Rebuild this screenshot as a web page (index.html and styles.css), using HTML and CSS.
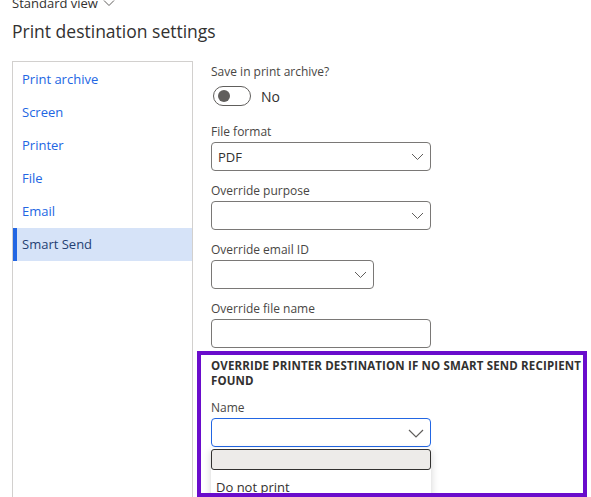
FILE: index.html
```html
<!DOCTYPE html>
<html>
<head>
<meta charset="utf-8">
<link rel="stylesheet" href="styles.css">
</head>
<body>
<div class="page">
  <div class="viewbar">Standard view
    <svg class="viewchev" width="12" height="8" viewBox="0 0 12 8"><path d="M1 1.5 L6 6.5 L11 1.5" fill="none" stroke="#605e5c" stroke-width="1"/></svg>
  </div>
  <h1 class="title">Print destination settings</h1>
  <div class="main">
    <nav class="nav">
      <a class="nav-item">Print archive</a>
      <a class="nav-item">Screen</a>
      <a class="nav-item">Printer</a>
      <a class="nav-item">File</a>
      <a class="nav-item">Email</a>
      <a class="nav-item selected">Smart Send</a>
    </nav>
    <div class="form">
      <div class="label">Save in print archive?</div>
      <div class="toggle-row">
        <span class="toggle"><span class="knob"></span></span>
        <span class="toggle-text">No</span>
      </div>
      <div class="field">
        <div class="label">File format</div>
        <div class="select wide"><span class="value">PDF</span>
          <svg class="chev" width="13" height="8" viewBox="0 0 13 8"><path d="M1 1 L6.5 6.5 L12 1" fill="none" stroke="#605e5c" stroke-width="1"/></svg>
        </div>
      </div>
      <div class="field">
        <div class="label">Override purpose</div>
        <div class="select wide"><span class="value"></span>
          <svg class="chev" width="13" height="8" viewBox="0 0 13 8"><path d="M1 1 L6.5 6.5 L12 1" fill="none" stroke="#605e5c" stroke-width="1"/></svg>
        </div>
      </div>
      <div class="field">
        <div class="label">Override email ID</div>
        <div class="select narrow"><span class="value"></span>
          <svg class="chev" width="13" height="8" viewBox="0 0 13 8"><path d="M1 1 L6.5 6.5 L12 1" fill="none" stroke="#605e5c" stroke-width="1"/></svg>
        </div>
      </div>
      <div class="field last">
        <div class="label">Override file name</div>
        <div class="select wide"><span class="value"></span></div>
      </div>
      <section class="override">
        <div class="override-head">OVERRIDE PRINTER DESTINATION IF NO SMART SEND RECIPIENT FOUND</div>
        <div class="label">Name</div>
        <div class="combo">
          <div class="select wide focused"><span class="value"></span>
            <svg class="chev big" width="16" height="9" viewBox="0 0 16 9"><path d="M1 1 L8 8 L15 1" fill="none" stroke="#605e5c" stroke-width="1.2"/></svg>
          </div>
          <div class="dropdown">
            <div class="option blank"></div>
            <div class="option">Do not print</div>
          </div>
        </div>
      </section>
    </div>
  </div>
</div>
</body>
</html>
```

FILE: styles.css
```css
html, body {
  margin: 0;
  padding: 0;
  background: #ffffff;
  overflow: hidden;
}

.page {
  font-family: "Open Sans", "Noto Sans", sans-serif;
  color: #323130;
  height: 497px;
  overflow: hidden;
}

.viewbar {
  margin: -6px 0 0 12px;
  font-size: 13px;
  line-height: 18px;
  color: #323130;
  display: flex;
  align-items: center;
  gap: 5px;
}

.title {
  margin: 7px 0 0 12px;
  font-size: 17.5px;
  line-height: 24px;
  font-weight: 500;
  color: #323130;
}

.main {
  display: flex;
  margin-top: 18px;
  padding-left: 12px;
  gap: 18px;
}

.nav {
  flex: 0 0 auto;
  width: 179px;
  height: 460px;
  border: 1px solid #d2d0ce;
  border-bottom: none;
  display: flex;
  flex-direction: column;
  padding-top: 1px;
}

.nav-item {
  display: block;
  height: 33px;
  line-height: 33px;
  padding-left: 5px;
  font-size: 13px;
  color: #2266e3;
  border-left: 4px solid transparent;
}

.nav-item.selected {
  background: #d6e3f8;
  border-left-color: #2266e3;
  color: #243f73;
}

.form {
  flex: 0 0 auto;
  display: flex;
  flex-direction: column;
  padding-top: 1px;
  width: 390px;
}

.label {
  font-size: 12px;
  line-height: 20px;
  color: #484644;
}

.toggle-row {
  display: flex;
  align-items: center;
  margin-top: 4px;
  margin-bottom: 16px;
  height: 20px;
}

.toggle {
  box-sizing: border-box;
  width: 38px;
  height: 20px;
  margin-left: 2px;
  border: 1px solid #605e5c;
  border-radius: 10px;
  display: flex;
  align-items: center;
  padding-left: 4px;
}

.knob {
  width: 12px;
  height: 12px;
  border-radius: 50%;
  background: #605e5c;
}

.toggle-text {
  margin-left: 10px;
  font-size: 14px;
  color: #323130;
}

.field {
  margin-bottom: 10px;
}

.field.last {
  margin-bottom: 3px;
}

.select {
  box-sizing: border-box;
  height: 29px;
  border: 1px solid #7a7876;
  border-radius: 4px;
  display: flex;
  align-items: center;
  justify-content: space-between;
  padding: 0 6px 0 6px;
  background: #fff;
}

.select.wide { width: 220px; }
.select.narrow { width: 163px; }

.select.focused {
  border-color: #2266e3;
}

.value {
  font-size: 13px;
  color: #323130;
}

.chev.big {
  margin-top: 2px;
}

.override {
  position: relative;
  margin-left: -14px;
  box-sizing: border-box;
  width: 390px;
  height: 146px;
  padding: 7px 0 0 14px;
  overflow: hidden;
}

.override::after {
  content: "";
  position: absolute;
  inset: 0;
  border: 4px solid #6a0ccc;
  pointer-events: none;
  z-index: 5;
}

.override-head {
  font-size: 11.5px;
  letter-spacing: 0.15px;
  font-weight: 700;
  line-height: 15px;
  color: #323130;
  width: 376px;
  margin-bottom: 10px;
}

.combo {
  position: relative;
}

.dropdown {
  position: absolute;
  left: 0;
  top: 30px;
  width: 220px;
  background: #fff;
  box-shadow: 0 3px 8px rgba(0, 0, 0, 0.18);
  z-index: 2;
}

.option {
  box-sizing: border-box;
  height: 34px;
  font-size: 13px;
  line-height: 34px;
  padding-left: 5px;
  color: #323130;
}

.option.blank {
  height: 21px;
  background: #edebe9;
  border: 1px solid #323130;
  border-radius: 3px;
  margin-top: 1px;
}
```
